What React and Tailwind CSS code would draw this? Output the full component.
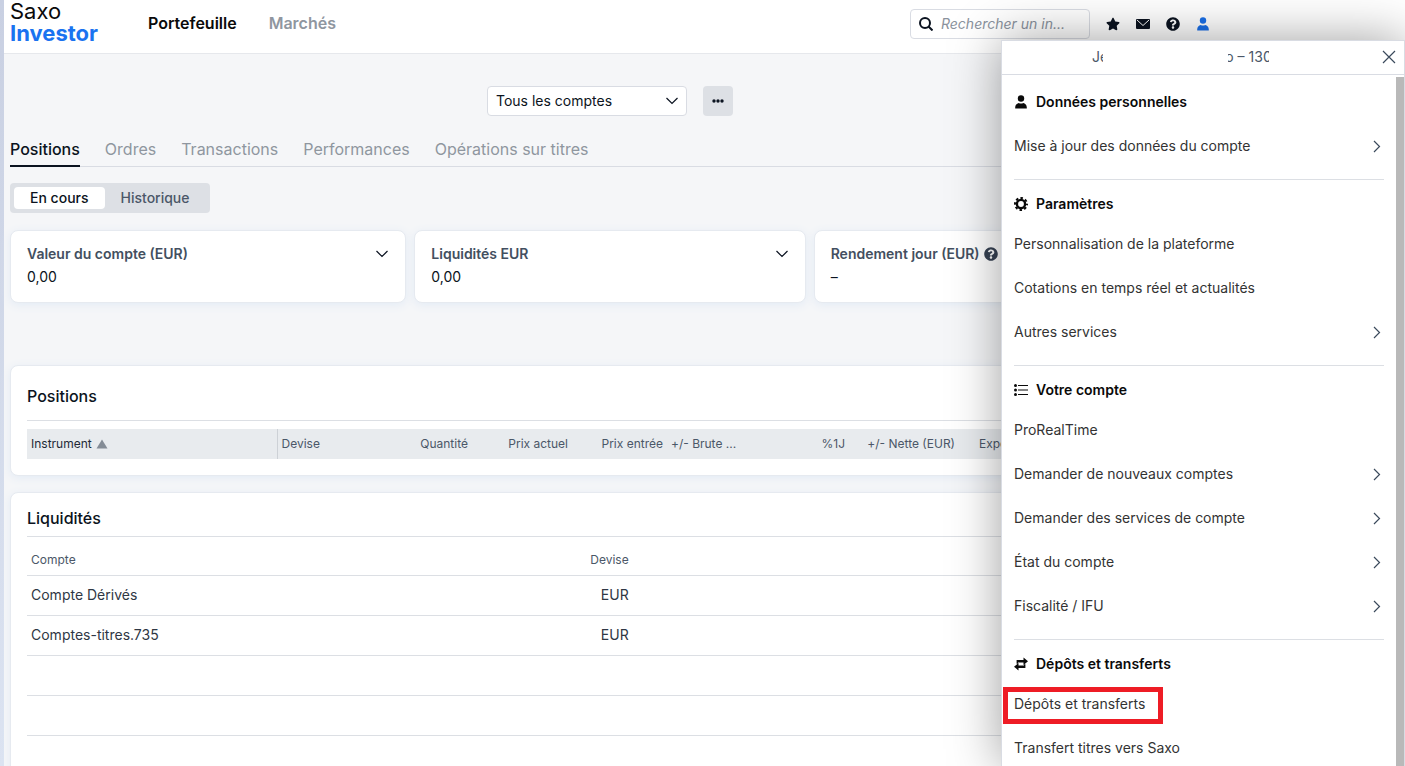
import { useState } from "react";
import { FaStar, FaQuestionCircle } from "react-icons/fa";

const tabs = [
  "Positions",
  "Ordres",
  "Transactions",
  "Performances",
  "Opérations sur titres",
];

const positionColumns = [
  { label: "Devise", className: "w-[96px] text-left" },
  { label: "Quantité", className: "w-[99px] text-right" },
  { label: "Prix actuel", className: "w-[100px] text-right" },
  { label: "Prix entrée", className: "w-[95px] text-right" },
  { label: "+/- Brute ...", className: "w-[82px] text-left" },
  { label: "%1J", className: "w-[100px] text-right" },
  { label: "+/- Nette (EUR)", className: "w-[110px] text-right" },
  { label: "Exposition", className: "text-left pl-5!" },
];

const cashRows = [
  { account: "Compte Dérivés", currency: "EUR" },
  { account: "Comptes-titres.735", currency: "EUR" },
  { account: "", currency: "" },
  { account: "", currency: "" },
];

const menu = [
  {
    title: "Données personnelles",
    icon: <UserIcon />,
    items: [{ label: "Mise à jour des données du compte", more: true }],
  },
  {
    title: "Paramètres",
    icon: <GearIcon />,
    items: [
      { label: "Personnalisation de la plateforme" },
      { label: "Cotations en temps réel et actualités" },
      { label: "Autres services", more: true },
    ],
  },
  {
    title: "Votre compte",
    icon: <ListIcon />,
    items: [
      { label: "ProRealTime" },
      { label: "Demander de nouveaux comptes", more: true },
      { label: "Demander des services de compte", more: true },
      { label: "État du compte", more: true },
      { label: "Fiscalité / IFU", more: true },
    ],
  },
  {
    title: "Dépôts et transferts",
    icon: <TransferIcon />,
    items: [
      { label: "Dépôts et transferts", highlighted: true },
      { label: "Transfert titres vers Saxo" },
    ],
  },
];

function UserIcon() {
  return (
    <svg viewBox="0 0 14 14" className="size-[14px]" fill="currentColor">
      <circle cx="7" cy="3.5" r="3.2" />
      <path d="M1.2 13.6v-1.2c0-2.4 1.6-3.9 3.6-4.5 1.4.7 3 .7 4.4 0 2 .6 3.6 2.1 3.6 4.5v1.2z" />
    </svg>
  );
}

function GearIcon() {
  return (
    <svg
      viewBox="0 0 14 14"
      className="size-[14px]"
      fill="none"
      stroke="currentColor"
    >
      <circle cx="7" cy="7" r="4.1" strokeWidth="2.4" />
      <circle
        cx="7"
        cy="7"
        r="6"
        strokeWidth="2"
        strokeDasharray="2.5 2.21"
        strokeDashoffset="1.25"
      />
    </svg>
  );
}

function ListIcon() {
  return (
    <svg viewBox="0 0 14 14" className="size-[14px]" fill="currentColor">
      <circle cx="1.5" cy="2.5" r="1.5" />
      <circle cx="1.5" cy="7" r="1.5" />
      <circle cx="1.5" cy="11.5" r="1.5" />
      <path d="M4 2h10v1H4zM4 6.5h10v1H4zM4 11h10v1H4z" />
    </svg>
  );
}

function TransferIcon() {
  return (
    <svg viewBox="0 0 14 14" className="size-[14px]" fill="currentColor">
      <path d="M9.5.5 14 4.2 9.5 8V5.5H4v1.3H2.600V3h6.900z" />
      <path d="M4.500 13.500 0 9.800 4.500 6v2.500H10V7.200h1.400V11H4.500z" />
    </svg>
  );
}

function MailIcon() {
  return (
    <svg viewBox="0 0 14 14" className="size-[14px]" fill="currentColor">
      <rect y="2" width="14" height="10" rx="1" />
      <path d="m1 3 6 5.5L13 3" fill="none" stroke="#fff" />
    </svg>
  );
}

function SearchIcon() {
  return (
    <svg
      viewBox="0 0 14 14"
      className="size-[14px] shrink-0"
      fill="none"
      stroke="currentColor"
      strokeWidth="2"
    >
      <circle cx="6" cy="6" r="5" />
      <path d="m9.5 9.5 4 4" />
    </svg>
  );
}

function ChevronDown({ className = "" }) {
  return (
    <svg
      viewBox="0 0 14 14"
      className={`size-[14px] ${className}`}
      fill="none"
      stroke="#0b1320"
      strokeWidth="1.2"
    >
      <path d="M1.5 4 7 9.500 12.500 4" />
    </svg>
  );
}

function ChevronRight() {
  return (
    <svg
      viewBox="0 0 14 14"
      className="size-[14px]"
      fill="none"
      stroke="#3b4a5c"
      strokeWidth="1.2"
    >
      <path d="M4 2 9.500 7.500 4 13" />
    </svg>
  );
}

function SummaryCard({ title, value, help }) {
  return (
    <div className="h-[73px] rounded-lg border border-[#e6eaf0] bg-white px-4 pt-3 shadow-[0_2px_10px_#e3ebf5]">
      <div className="flex items-center justify-between">
        <h3 className="flex items-center gap-1 text-sm leading-[22px] font-semibold text-[#434f60]">
          {title}
          {help && <FaQuestionCircle className="size-[14px] text-[#374253]" />}
        </h3>
        {!help && (
          <button aria-label={`Détails ${title}`}>
            <ChevronDown />
          </button>
        )}
      </div>
      <p className="text-sm leading-6">{value}</p>
    </div>
  );
}

function AccountDrawer({ onClose }) {
  return (
    <aside className="absolute top-10 right-0 bottom-0 flex w-[404px] flex-col border-x border-t border-[#d9dce3] bg-white shadow-[0_0_48px_rgba(0,0,0,0.38)]">
      <div className="flex h-[34px] shrink-0 items-center border-b border-[#d9dce3] pr-2 pb-px pl-[90px] text-sm text-[#4b5768]">
        <span className="w-[11px] overflow-hidden whitespace-nowrap">Je</span>
        <span className="ml-[125px] flex w-[41px] justify-center overflow-hidden whitespace-nowrap">
          o – 130
        </span>
        <button aria-label="Fermer" className="ml-auto" onClick={onClose}>
          <svg
            viewBox="0 0 14 14"
            className="size-[14px]"
            stroke="#3b4a5c"
            strokeWidth="1.2"
          >
            <path d="m1 1 12 12M13 1 1 13" />
          </svg>
        </button>
      </div>
      <div className="flex min-h-0 flex-1">
        <nav className="flex-1 overflow-hidden px-3 pt-[3px]">
          {menu.map((group) => (
            <section
              key={group.title}
              className="border-b border-[#dcdfe4] pt-[6px] pb-[11px] first:[&>h2]:mb-1 last:border-b-0"
            >
              <h2 className="flex h-9 items-center gap-2 text-sm font-semibold text-[#0a0a0a]">
                {group.icon}
                {group.title}
              </h2>
              <ul>
                {group.items.map((item) => (
                  <li key={item.label}>
                    <a
                      href="#"
                      className="flex h-11 items-center justify-between text-sm text-[#333]"
                    >
                      <span className="relative">
                        {item.label}
                        {item.highlighted && (
                          <span className="absolute -top-[7px] -right-[18px] -bottom-[10px] -left-[11px] border-5 border-[#ee1c25]" />
                        )}
                      </span>
                      {item.more && <ChevronRight />}
                    </a>
                  </li>
                ))}
              </ul>
            </section>
          ))}
        </nav>
        <div className="mt-[2px] w-2 bg-[#b9b9b9]" />
      </div>
    </aside>
  );
}

export default function App() {
  const [activeTab, setActiveTab] = useState("Positions");
  const [view, setView] = useState("En cours");
  const [drawerOpen, setDrawerOpen] = useState(true);

  return (
    <div className="relative flex h-screen overflow-hidden bg-[#f5f6f8] font-['Inter',sans-serif] text-[#0b1320]">
      <div className="w-1 shrink-0 bg-linear-to-b from-[#c9d0e2] to-[#dbe3f1]" />
      <div className="min-w-0 flex-1">
        <header className="flex h-[54px] items-center border-b border-[#e6e8ec] bg-white pr-[195px] pb-[6px] pl-[6px]">
          <a
            href="#"
            className="flex flex-col self-start text-[22px] leading-[22px] text-[#0a0a0a]"
          >
            <span>Saxo</span>
            <span className="font-bold text-[#1a73f0]">Investor</span>
          </a>
          <nav className="ml-[50px] flex gap-8 pb-px font-semibold">
            <a href="#" className="text-[#0a0a0a]">
              Portefeuille
            </a>
            <a href="#" className="text-[#8f969f]">
              Marchés
            </a>
          </nav>
          <label className="ml-auto flex h-[30px] w-[180px] items-center gap-2 rounded-sm border border-[#d9dce3] px-2">
            <SearchIcon />
            <input
              type="search"
              aria-label="Rechercher"
              placeholder="Rechercher un in..."
              className="w-full min-w-0 text-sm italic outline-none placeholder:text-[#8a929d]"
            />
          </label>
          <div className="ml-4 flex gap-4">
            <button aria-label="Favoris">
              <FaStar className="size-[14px]" />
            </button>
            <button aria-label="Messages">
              <MailIcon />
            </button>
            <button aria-label="Aide">
              <FaQuestionCircle className="size-[14px]" />
            </button>
            <button
              aria-label="Compte"
              className="text-[#1a6fe8]"
              onClick={() => setDrawerOpen(!drawerOpen)}
            >
              <UserIcon />
            </button>
          </div>
        </header>

        <main className="pr-[195px] pl-[6px]">
          <div className="flex justify-center gap-4 pt-8">
            <div className="relative w-[200px]">
              <select
                aria-label="Comptes"
                className="h-[30px] w-full appearance-none rounded-sm border border-[#d9dce3] bg-white px-2 text-sm"
              >
                <option>Tous les comptes</option>
              </select>
              <ChevronDown className="pointer-events-none absolute top-2 right-2" />
            </div>
            <button
              aria-label="Plus d'options"
              className="flex size-[30px] items-center justify-center rounded-sm bg-[#dde0e5]"
            >
              <svg viewBox="0 0 12 4" className="w-3" fill="currentColor">
                <circle cx="2" cy="2" r="1.7" />
                <circle cx="6" cy="2" r="1.7" />
                <circle cx="10" cy="2" r="1.7" />
              </svg>
            </button>
          </div>

          <div className="mt-4 flex h-[35px] gap-[25px] border-b border-[#d9dce3]">
            {tabs.map((tab) => (
              <button
                key={tab}
                onClick={() => setActiveTab(tab)}
                className={
                  tab === activeTab
                    ? "-mb-px border-b-2 border-[#0b1320] font-medium"
                    : "-mb-px border-b-2 border-transparent text-[#8f969f]"
                }
              >
                {tab}
              </button>
            ))}
          </div>

          <div className="mt-4 flex w-fit rounded-sm bg-[#dde0e5] p-1 text-sm font-medium">
            {["En cours", "Historique"].map((label) => (
              <button
                key={label}
                onClick={() => setView(label)}
                className={
                  label === view
                    ? "h-[22px] rounded-sm bg-white px-4"
                    : "h-[22px] px-4 text-[#4b5768]"
                }
              >
                {label}
              </button>
            ))}
          </div>

          <div className="mt-[17px] grid grid-cols-[396fr_391fr_396fr] gap-2">
            <SummaryCard title="Valeur du compte (EUR)" value="0,00" />
            <SummaryCard title="Liquidités EUR" value="0,00" />
            <SummaryCard title="Rendement jour (EUR)" value="–" help />
          </div>

          <section className="mt-[62px] rounded-lg border border-[#e6eaf0] bg-white px-4 pb-4 shadow-[0_2px_10px_#e3ebf5]">
            <h2 className="flex h-[55px] items-center border-b border-[#dcdfe4] pt-[6px] font-medium">
              Positions
            </h2>
            <table className="mt-2 w-full table-fixed bg-[#e8ebee] text-xs text-[#4b5768]">
              <thead>
                <tr className="h-[30px] [&>th]:px-1 [&>th]:font-normal">
                  <th className="w-[250px] border-r border-[#cdd1d6] text-left text-[#1f2937]">
                    <span className="flex items-center gap-1">
                      Instrument
                      <svg
                        viewBox="0 0 12 10"
                        className="h-[10px] w-3"
                        fill="#848c96"
                      >
                        <path d="M6 .5 11.5 9.5H.5z" />
                      </svg>
                    </span>
                  </th>
                  {positionColumns.map((column) => (
                    <th
                      key={column.label}
                      className={`whitespace-nowrap ${column.className}`}
                    >
                      {column.label}
                    </th>
                  ))}
                </tr>
              </thead>
            </table>
          </section>

          <section className="mt-4 rounded-lg border border-[#e6eaf0] bg-white px-4 pb-16 shadow-[0_2px_10px_#e3ebf5]">
            <h2 className="flex h-11 items-center border-b border-[#dcdfe4] pt-[6px] font-medium">
              Liquidités
            </h2>
            <table className="w-full table-fixed text-sm text-[#2f3744]">
              <thead>
                <tr className="h-[38px] border-b border-[#dcdfe4] text-xs text-[#4b5768] [&>th]:px-1 [&>th]:pt-2 [&>th]:font-normal">
                  <th className="w-1/3 text-left">Compte</th>
                  <th className="w-[217px] text-right">Devise</th>
                  <th aria-label="Solde" />
                </tr>
              </thead>
              <tbody>
                {cashRows.map((row, index) => (
                  <tr
                    key={index}
                    className="h-10 border-b border-[#dcdfe4] [&>td]:px-1"
                  >
                    <td>{row.account}</td>
                    <td className="text-right">{row.currency}</td>
                    <td />
                  </tr>
                ))}
              </tbody>
            </table>
          </section>
        </main>
      </div>
      {drawerOpen && <AccountDrawer onClose={() => setDrawerOpen(false)} />}
    </div>
  );
}
